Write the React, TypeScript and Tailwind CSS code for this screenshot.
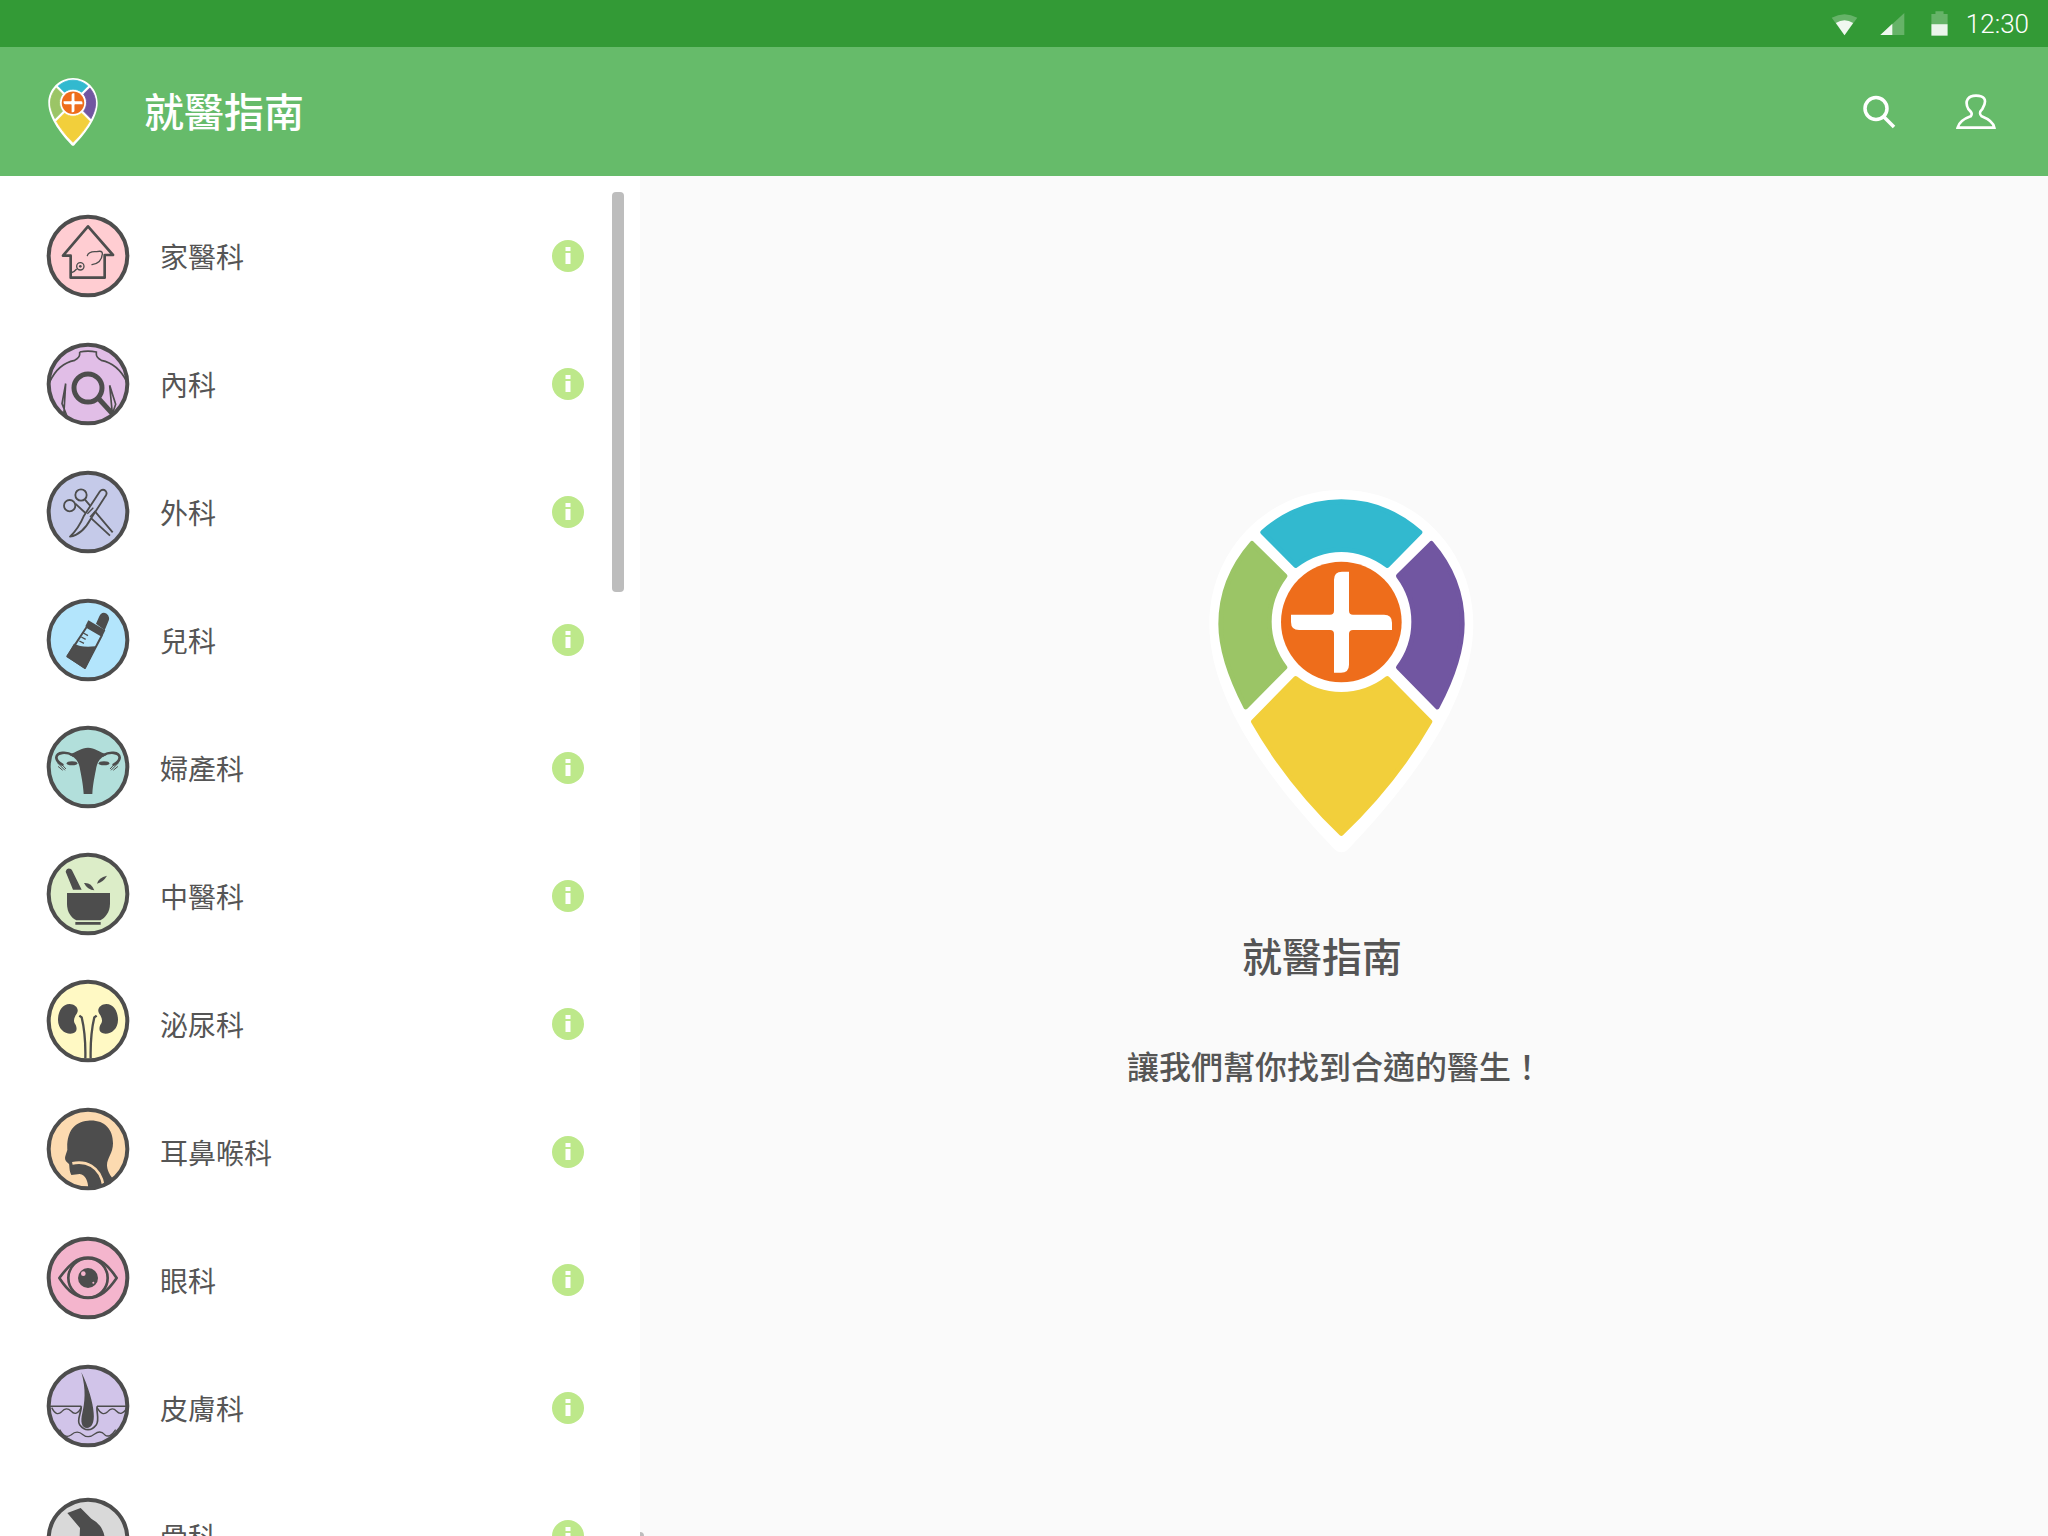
import React from "react";

const D = "#4d4d4d";

function Logo({ className, viewBox }: { className: string; viewBox: string }) {
  return (
    <svg className={className} viewBox={viewBox}>
      <path d="M484 60C705 60 880 240 880 462C880 720 645 990 506 1136C493 1150 475 1150 462 1136C323 990 88 720 88 462C88 240 263 60 484 60Z" fill="#fff" />
      <g strokeWidth="14" strokeLinejoin="round">
        <path d="M248 187C318 125 400 95 484 95C568 95 650 125 720 187L622 287C585 260 535 239 484 239C433 239 383 260 347 287Z" fill="#32b9cf" stroke="#32b9cf" />
        <path d="M216 220L315 318C285 358 268 405 268 455C268 505 285 552 315 592L197 711C150 620 122 540 122 462C122 375 155 290 216 220Z" fill="#9bc566" stroke="#9bc566" />
        <path d="M754 220L655 318C685 358 701 405 701 455C701 505 685 552 655 592L772 711C820 620 847 540 847 462C847 375 815 290 754 220Z" fill="#7156a1" stroke="#7156a1" />
        <path d="M347 625C385 655 435 673 484 673C533 673 585 655 622 625L750 755C690 860 600 980 484 1091C368 980 280 860 220 755Z" fill="#f2cf3b" stroke="#f2cf3b" />
      </g>
      <circle cx="484" cy="456" r="181" fill="#ee6d1b" />
      <path d="M507 305V422Q507 434 519 434H612Q636 434 636 458V480H519Q507 480 507 492V584Q507 608 483 608H462V492Q462 480 450 480H357Q333 480 333 456V434H450Q462 434 462 422V329Q462 305 486 305Z" fill="#fff" />
    </svg>
  );
}

function Disc({ bg, ox, oy, id, shift = "", children }: { bg: string; ox: number; oy: number; id: string; shift?: string; children: React.ReactNode }) {
  return (
    <svg className={`h-[84px] w-[84px] shrink-0 ${shift}`} viewBox="0 0 252 252">
      <defs>
        <clipPath id={id}>
          <circle cx="126" cy="126" r="119" />
        </clipPath>
      </defs>
      <circle cx="126" cy="126" r="119" fill={bg} />
      <g clipPath={`url(#${id})`}>
        <g transform={`translate(${-ox} ${-oy})`}>{children}</g>
      </g>
      <circle cx="126" cy="126" r="118" fill="none" stroke={D} strokeWidth="12" />
    </svg>
  );
}

const House = () => (
  <Disc id="a" bg="#ffcdd2" ox={48} oy={41}>
    <path d="M174 78L249 164H224V232H122V166H99Z" fill="none" stroke={D} strokeWidth="8" strokeLinejoin="round" />
    <circle cx="151" cy="198" r="11" fill="none" stroke={D} strokeWidth="4" />
    <circle cx="151" cy="198" r="4" fill={D} />
    <path d="M140 206Q132 216 122 218" fill="none" stroke={D} strokeWidth="4" />
    <path d="M172 166Q176 152 200 154Q218 150 217 160C216 178 205 190 186 193" fill="none" stroke={D} strokeWidth="4" strokeLinecap="round" />
  </Disc>
);

const Body = () => (
  <Disc id="b" bg="#e1bee7" ox={49} oy={425}>
    <path d="M150 455Q175 450 200 455V462Q200 472 215 480Q265 490 292 545M150 455V462Q150 472 135 480Q85 490 60 545" fill="none" stroke={D} strokeWidth="5" />
    <path d="M108 550L97 610L113 650M108 550L102 650M240 555L258 612L245 650M240 555L248 640" fill="none" stroke={D} strokeWidth="5" />
    <circle cx="175" cy="563" r="42" fill="none" stroke={D} strokeWidth="15" />
    <path d="M208 596L250 642" stroke={D} strokeWidth="15" />
  </Disc>
);

const Surgery = () => (
  <Disc id="c" bg="#c5cae9" ox={48} oy={149}>
    <g fill="none" stroke={D} strokeWidth="5.5">
      <circle cx="153" cy="224" r="17" />
      <circle cx="119" cy="256" r="17" />
      <path d="M165 238L248 336M136 250L240 346" />
      <path d="M209 214Q218 204 227 212Q233 219 226 228L182 296C168 322 146 345 120 349C140 330 152 310 162 286Z" fill="#c5cae9" strokeLinejoin="round" />
      <path d="M172 280L190 262M180 290L196 272" strokeWidth="4" />
    </g>
  </Disc>
);

const Bottle = () => (
  <Disc id="d" bg="#b3e5fc" ox={48} oy={533}>
    <path d="M198 610L208 588Q215 572 230 580Q242 590 234 606L224 630Z" fill={D} />
    <path d="M175 600L226 630L217 648L166 618Z" fill={D} />
    <path d="M170 620L215 646L165 742L112 708Z" fill="none" stroke={D} strokeWidth="6" strokeLinejoin="round" />
    <path d="M133 672C150 684 175 682 196 680L165 744L112 708Z" fill={D} stroke={D} strokeWidth="4" strokeLinejoin="round" />
    <path d="M160 638L174 646M154 650L167 657M148 662L162 669" stroke={D} strokeWidth="4" />
  </Disc>
);

const Uterus = () => (
  <Disc id="e" shift="-translate-y-px" bg="#b2dfdb" ox={49} oy={915}>
    <path d="M175 983C195 983 208 995 232 1004C212 1012 204 1024 200 1042C195 1070 190 1090 188 1122H162C160 1090 155 1070 150 1042C146 1024 138 1012 118 1004C142 995 155 983 175 983Z" fill={D} />
    <g fill="none" stroke={D} strokeWidth="8" strokeLinecap="round">
      <path d="M130 1006C110 994 82 996 80 1012C80 1024 90 1030 98 1034" />
      <path d="M220 1006C240 994 268 996 270 1012C270 1024 260 1030 252 1034" />
      <path d="M85 1030L105 1050M95 1032L108 1046M86 1040L98 1050M265 1030L245 1050M255 1032L242 1046M264 1040L252 1050" strokeWidth="3" />
    </g>
    <ellipse cx="127" cy="1030" rx="16" ry="6" fill={D} />
    <ellipse cx="223" cy="1030" rx="16" ry="6" fill={D} />
  </Disc>
);

const Mortar = () => (
  <Disc id="f" shift="-translate-y-0.5" bg="#dcedc8" ox={49} oy={157}>
    <path d="M112 280H241V312C241 338 226 354 212 362H140C125 354 112 338 112 312Z" fill={D} />
    <path d="M137 367H213V375H137Z" fill={D} />
    <path d="M108 216Q112 202 124 208Q128 212 130 218L156 270H130Z" fill={D} />
    <path d="M163 250Q185 248 194 272Q174 272 163 250Z" fill={D} />
    <path d="M202 252Q206 234 232 228Q222 246 202 252Z" fill={D} />
  </Disc>
);

const Kidney = () => (
  <Disc id="g" shift="-translate-y-[3px]" bg="#fff9c4" ox={49} oy={537}>
    <path d="M120 612C97 612 85 635 85 660C85 690 110 705 130 700C145 695 142 680 135 670C130 660 135 650 142 640C150 625 135 612 120 612Z" fill={D} />
    <path d="M230 612C253 612 265 635 265 660C265 690 240 705 220 700C205 695 208 680 215 670C220 660 215 650 208 640C200 625 215 612 230 612Z" fill={D} />
    <path d="M149 647L156 652C165 690 168 730 167 775M201 647L194 652C185 690 182 730 183 775" fill="none" stroke={D} strokeWidth="7" />
  </Disc>
);

const Head = () => (
  <Disc id="h" shift="-translate-y-[3px]" bg="#fcdab0" ox={49} oy={921}>
    <path d="M175 962C222 958 250 985 250 1030C250 1060 232 1075 232 1095C232 1110 240 1125 250 1136L225 1175H175C178 1150 170 1125 150 1122L125 1125C118 1112 120 1098 118 1092C108 1085 103 1078 108 1065L113 1050C110 1000 130 965 175 962Z" fill={D} />
    <path d="M128 1090C165 1082 212 1095 222 1160" fill="none" stroke="#fcdab0" strokeWidth="8" />
  </Disc>
);

const Eye = () => (
  <Disc id="i" shift="-translate-y-0.5" bg="#f4b5cd" ox={48} oy={167}>
    <path d="M88 293C120 250 140 232 174 232C210 232 235 255 260 293C235 330 210 353 174 353C140 353 115 335 88 293Z" fill="none" stroke={D} strokeWidth="8" strokeLinejoin="round" />
    <circle cx="174" cy="293" r="59" fill="none" stroke={D} strokeWidth="8" />
    <circle cx="174" cy="293" r="30" fill={D} />
    <circle cx="160" cy="280" r="7" fill="#f4b5cd" />
    <circle cx="190" cy="307" r="3" fill="#f4b5cd" />
  </Disc>
);

const Skin = () => (
  <Disc id="j" shift="-translate-y-0.5" bg="#d1c4e9" ox={49} oy={553}>
    <path d="M60 680H155M202 680H295" stroke={D} strokeWidth="4.5" />
    <path d="M66 684Q80 712 96 696Q110 680 124 694Q140 712 155 684M202 684Q218 712 234 696Q248 680 260 694Q276 712 292 684" fill="none" stroke={D} strokeWidth="4" />
    <path d="M155 680C155 700 140 722 150 735C165 755 185 755 200 735C210 720 200 700 202 680" fill="none" stroke={D} strokeWidth="5" />
    <path d="M155 578C176 620 190 670 192 700C195 730 185 745 172 745C155 745 152 725 158 700C165 670 170 630 155 578Z" fill={D} />
    <path d="M90 750Q105 780 125 765Q142 750 160 765Q176 778 195 763Q212 750 225 765Q240 778 258 750" fill="none" stroke={D} strokeWidth="4" />
  </Disc>
);

const Bone = () => (
  <Disc id="k" shift="translate-y-[3px]" bg="#d9d9d9" ox={46} oy={947}>
    <path d="M110 995L150 980L182 1012Q216 1030 222 1068L218 1110H145L148 1040Z" fill={D} />
  </Disc>
);

const rows: [string, React.FC][] = [
  ["家醫科", House],
  ["內科", Body],
  ["外科", Surgery],
  ["兒科", Bottle],
  ["婦產科", Uterus],
  ["中醫科", Mortar],
  ["泌尿科", Kidney],
  ["耳鼻喉科", Head],
  ["眼科", Eye],
  ["皮膚科", Skin],
  ["骨科", Bone],
];

function Info() {
  return (
    <svg className="h-8 w-8" viewBox="0 0 32 32">
      <circle cx="16" cy="16" r="16" fill="#bde88a" />
      <rect x="13.5" y="7" width="5" height="4" fill="#fff" />
      <rect x="13.5" y="13" width="5" height="11" fill="#fff" />
    </svg>
  );
}

export default function App() {
  return (
    <div className="flex h-[1536px] w-[2048px] flex-col overflow-hidden bg-[#fafafa] font-['Noto_Sans_CJK_TC',sans-serif]">
      <div className="flex h-[47px] shrink-0 items-center justify-end bg-[#339a36] pr-[19px]">
        <svg className="mr-[22px] h-[24px] w-[27px]" viewBox="150 28 84 75">
          <path d="M152 46Q192 24 232 46L192 101Z" fill="#fff" fillOpacity="0.25" />
          <path d="M165 62Q192 46 219 62L192 101Z" fill="#fff" fillOpacity="0.9" />
        </svg>
        <svg className="mr-[26px] h-[24px] w-[25px]" viewBox="299 34 75 70">
          <path d="M372 36V102H300Z" fill="#fff" fillOpacity="0.25" />
          <path d="M336 102H300L336 68Z" fill="#fff" fillOpacity="0.9" />
        </svg>
        <svg className="mr-[18px] h-[25px] w-[17px]" viewBox="455 29 50 74">
          <path d="M468 30H492V38H504V68H456V38H468Z" fill="#fff" fillOpacity="0.25" />
          <path d="M456 68H504V102H456Z" fill="#fff" fillOpacity="0.9" />
        </svg>
        <span className="pt-px font-['Roboto',sans-serif] text-[26px] font-light leading-none text-white">12:30</span>
      </div>
      <header className="flex h-[129px] shrink-0 items-center bg-[#66bb6a] pl-[48px] pr-[52px]">
        <Logo className="h-[68px] w-[50px]" viewBox="86 60 796 1090" />
        <h1 className="-mt-[4px] ml-[46px] text-[40px] font-medium leading-none text-white">就醫指南</h1>
        <div className="flex-1" />
        <svg className="h-[36px] w-[36px]" viewBox="0 0 36 36">
          <circle cx="15" cy="14.5" r="11" fill="none" stroke="#fff" strokeWidth="3.5" />
          <path d="M23 23L33 33" stroke="#fff" strokeWidth="3.5" />
        </svg>
        <svg className="ml-[59px] h-[38px] w-[40px]" viewBox="528 285 120 108">
          <path d="M533 386H643C640 370 620 358 605 352C598 345 597 340 607 330C625 300 610 290 588 290C565 290 552 305 565 330C575 340 578 345 572 352C555 358 537 370 533 386Z" fill="none" stroke="#fff" strokeWidth="8" />
        </svg>
      </header>
      <div className="flex min-h-0 flex-1">
        <aside className="relative w-[640px] shrink-0 overflow-hidden bg-white pt-4">
          {rows.map(([label, Icon]) => (
            <div key={label} className="flex h-32 items-center pl-[46px] pr-[56px]">
              <Icon />
              <span className="ml-[30px] flex-1 text-[28px] leading-none text-[#555555]">{label}</span>
              <Info />
            </div>
          ))}
          <div className="absolute left-[612px] top-4 h-[400px] w-3 rounded-[4px] bg-[#bdbdbd]" />
        </aside>
        <main className="relative flex flex-1 flex-col pl-[487px] pt-[294px] text-[#555555]">
          <Logo className="ml-[53px] h-[390px] w-[320px]" viewBox="0 0 960 1170" />
          <h2 className="ml-[115px] mt-[75px] text-[40px] font-medium leading-none">就醫指南</h2>
          <p className="mt-[74px] text-[32px] font-medium leading-none">讓我們幫你找到合適的醫生！</p>
          <div className="absolute bottom-0 left-0 h-1 w-1 rounded-tr-full bg-[#bdbdbd]" />
        </main>
      </div>
    </div>
  );
}
